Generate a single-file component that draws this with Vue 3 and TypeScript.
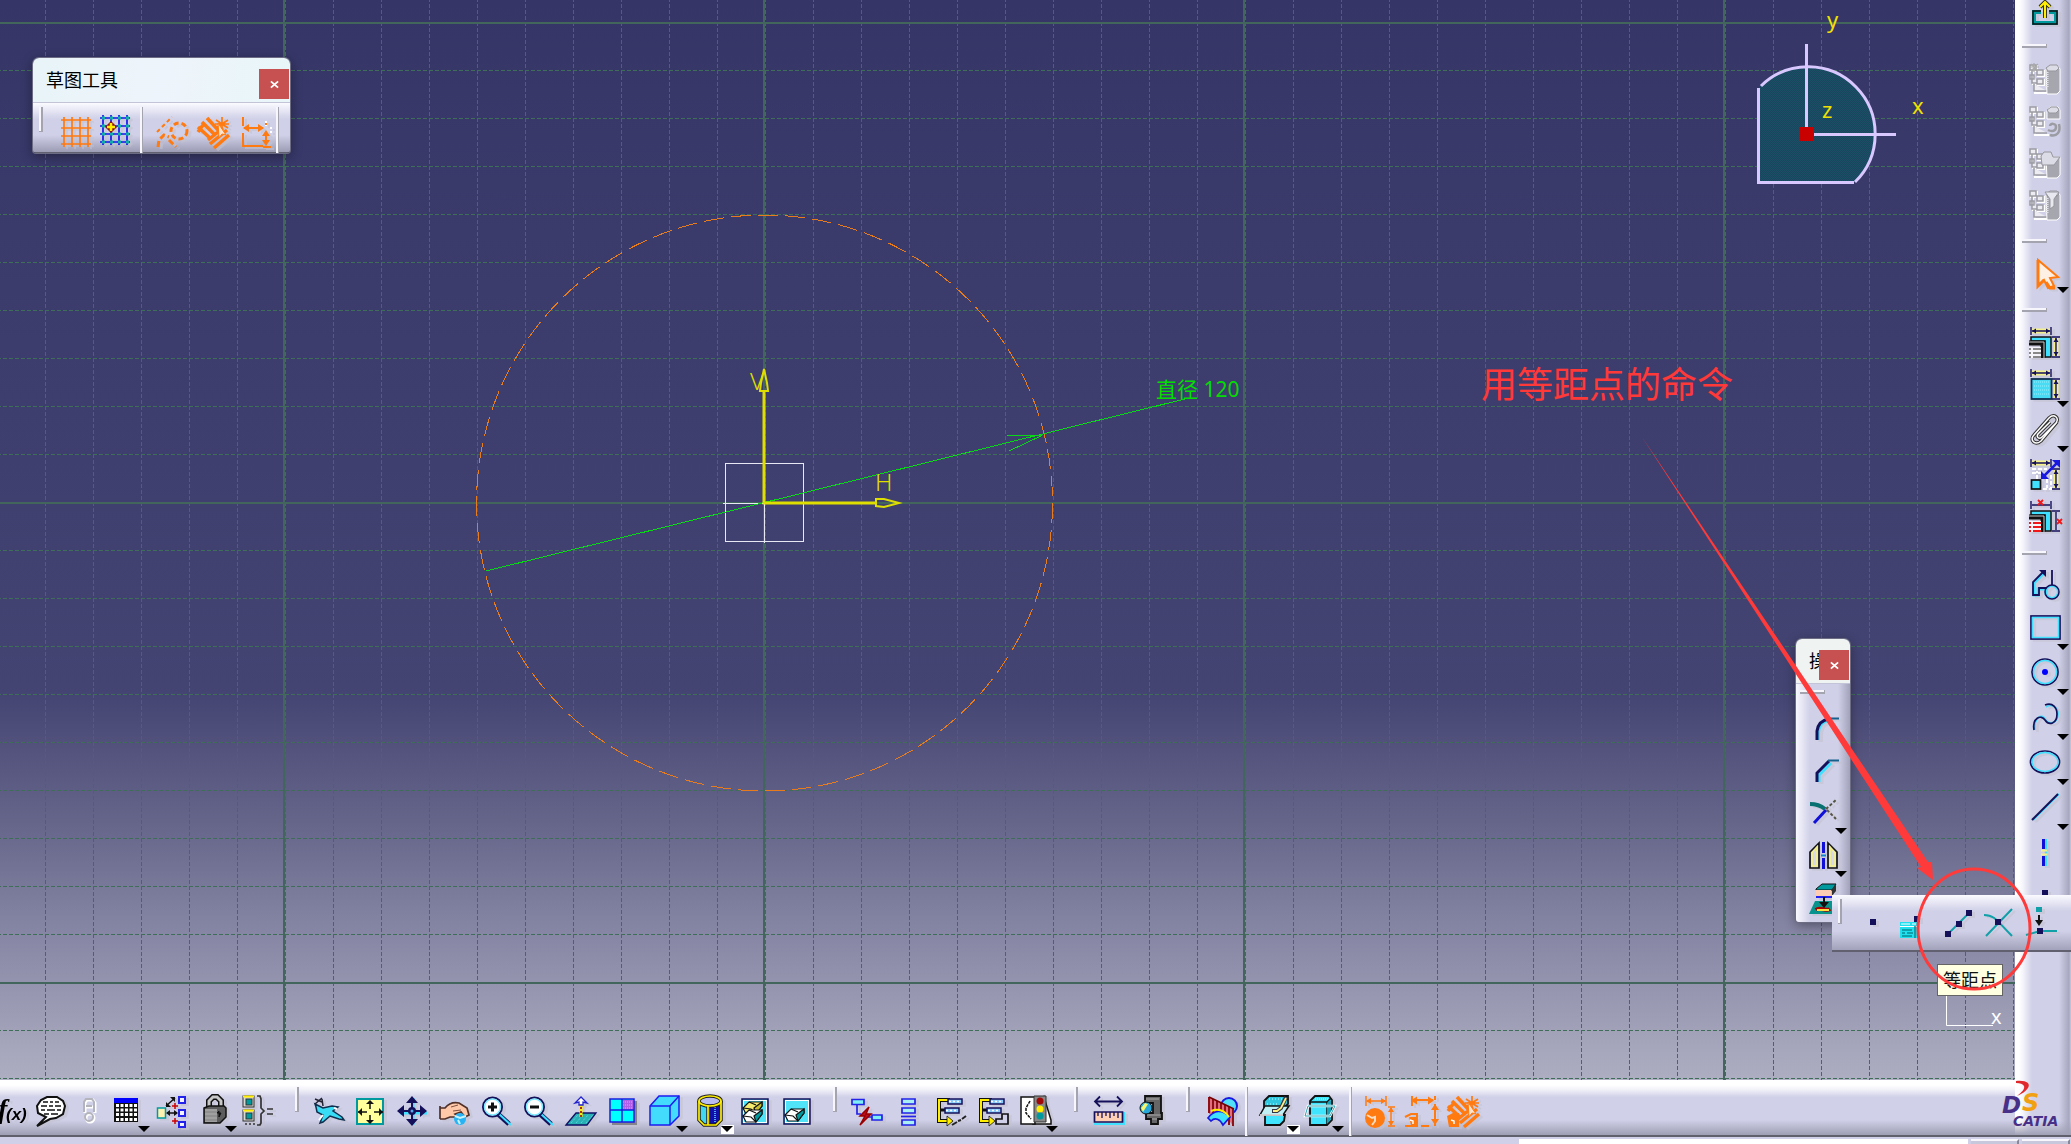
<script setup lang="ts">
interface Tool {
  id: string
  label: string
  art: string
  kind?: 'narrow' | 'disabled'
  menu?: boolean
  lit?: boolean
}

const NAVY = '#14105a'
const CYAN = '#40e0ff'
const TEAL = '#009a9e'
const ORANGE = '#ff7a10'

const yellowDims = `<g stroke="#f4f08c" stroke-width="5" fill="none"><path d="M3 4H21M27 11V29"/></g>
<g stroke="${NAVY}" stroke-width="1.4" fill="none"><path d="M2 0V8M22 0V8M3 4H21M23 10H31M23 30H31M27 11V29"/></g>
<path d="M3 4l4-2.500v5zM21 4l-4-2.500v5zM27 11l-2.500 4h5zM27 29l-2.500-4h5z" fill="${NAVY}"/>`

const panel = (row: string) => `<path d="M0 16H14V31" fill="none" stroke="#111" stroke-width="5"/>
<path d="M0 15H15V31" fill="none" stroke="#ccc" stroke-width="1"/>
<path d="M0 20H12V31H0z" fill="#f4f4fa"/><path d="M0 22H2M4 22H12M0 26H2M4 26H12M0 30H2M4 30H12" stroke="${row}" stroke-width="2"/>`

const tree = (tail: string) => `<path d="M16 5H5V26H14" fill="none" stroke="#111" stroke-width="4"/>
<path d="M6 15H14" stroke="#111" stroke-width="3"/>
<path d="M16 5H5V26H14" fill="none" stroke="#ffee00" stroke-width="2"/>
<path d="M13 21l6 5-6 5z" fill="#ffee00" stroke="#111" stroke-width=".8"/>
<rect x="14" y="4" width="14" height="5" fill="#8cf" stroke="${NAVY}" stroke-width="1.500"/>
<rect x="11" y="13" width="14" height="5" fill="#8cf" stroke="${NAVY}" stroke-width="1.500"/>
<path d="M15 6.500H27M12 15.500H24" stroke="#fff" stroke-width="1.500" stroke-dasharray="2 2"/>${tail}`

const ghost = (extra: string) => `<g transform="translate(0 1)"><g fill="none" stroke="#fff" stroke-width="2" transform="translate(1 1)"><path d="M1 1h6v5H1zM8 6h6v5H8zM8 15h6v5H8zM3 7v12h5M5 20v8h14"/></g>
<g fill="#ececf2" stroke="#9c9ca4" stroke-width="1.500"><path d="M1 1h6v5H1zM3 6v13h5M8 6h6v5H8zM8 15h6v5H8zM1 11h4v4H1zM5 20v7h13"/></g>${extra}</g>`

const block = `<path d="M17 5l4-3h8l2 3v22l-3 3H18z" fill="#a6a6ae" stroke="#fff" stroke-width="1"/><path d="M17 4l4-3h7l2 3-3 3h-8z" fill="#dcdce6" stroke="#96969e" stroke-width="1"/><path d="M18 8v16" stroke="#e2e2ea" stroke-width="3" stroke-dasharray="1 1"/>`

const brush = `<g stroke="${ORANGE}" fill="none" stroke-width="3.500"><path d="M1 11L14 23M5 6L18 19M10 2L22 15M1 16l5-7M13 28L30 14M17 32L32 19M11 24L26 12"/></g>
<g stroke="${ORANGE}" stroke-width="1.700"><path d="M19 4L31 12M25 1v15M19 12L31 4M18 8H32"/></g>
<path d="M21 7l8 12-4-1-3 4z" fill="#ffe4d0" stroke="${ORANGE}"/>`

const magnifier = (sign: string) => `<path d="M18 19L29 29" stroke="${NAVY}" stroke-width="5"/><path d="M19 19L31 30" stroke="${CYAN}" stroke-width="2"/>
<circle cx="12.500" cy="12" r="9.500" fill="#fff" stroke="${NAVY}" stroke-width="2"/><circle cx="12.500" cy="12" r="8" fill="none" stroke="#7ee8ff" stroke-width="1.500"/>
<path d="${sign}" stroke="#111" stroke-width="3"/>`

const eraser = (y: number, top: string, side: string) => `<g stroke="#111" stroke-width="1.200" transform="translate(0 ${y})"><path d="M5 5l6-6h13v4l-6 8H8z" fill="${top}"/><path d="M18 11l6-8v-4l-8 6z" fill="${side}"/><path d="M5 5l8 1 5 5M11 -1l7 3" fill="none"/></g>`

const frame = `<rect x="4" y="4" width="26" height="25" fill="#50e4f8" stroke="${NAVY}" stroke-width="1.500"/><rect x="5.500" y="5.500" width="23" height="22" fill="none" stroke="#fff"/>`

const orangeDims = `<path d="M3 1V11M23 1V11M4 6H22M25 12H32M25 31H32M28 13V30" stroke="${ORANGE}" stroke-width="1.500"/><path d="M3 6l5-3v6zM23 6l-5-3v6zM28 12l-3 5h6zM28 31l-3-5h6z" fill="${ORANGE}"/>`

const bottomGroups: { tail: 'grip' | 'rule' | 'end'; tools: Tool[] }[] = [
  {
    tail: 'grip',
    tools: [
      { id: 'fx', label: '公式', art: `<text x="5" y="23" font-family="Liberation Serif" font-style="italic" font-weight="700" font-size="28">f</text><text x="13" y="25" font-family="Liberation Sans" font-weight="700" font-style="italic" font-size="17">(x)</text>` },
      { id: 'note', label: '注释', art: `<path d="M2 31l9-9-8-4-1-7 4-6 6-3h10l6 4 2 5-2 8-7 4-6 1z" fill="#fff" stroke="#111" stroke-width="2"/><path d="M8 7h5m2 0h3m2 0h4M6 11h6m2 0h4m2 0h6M6 15h4m2 0h8m2 0h4M9 19h5m2 0h7" stroke="#111" stroke-width="1.300"/>` },
      { id: 'check', label: '检查', kind: 'narrow', art: `<g fill="none" stroke="#fff" stroke-width="3"><path d="M12 18V8l2-3h6l2 3v10M12 12h10"/><circle cx="17" cy="23" r="4"/></g><g fill="none" stroke="#b4b4bc" stroke-width="2"><path d="M11 17V7l2-3h6l2 3v10M13 11h6"/><circle cx="16" cy="22" r="4"/></g>` },
      { id: 'table', label: '设计表', menu: true, art: `<rect x="4" y="3" width="24" height="5" fill="#00f"/><rect x="4" y="8" width="24" height="19" fill="#111"/><path d="M6 10.500H27M6 15H27M6 19.500H27M6 24.500H27" stroke="#fff" stroke-width="3" stroke-dasharray="3 1.500"/>` },
      { id: 'law', label: '关联', art: `<rect x="2.500" y="13" width="8" height="10" fill="#fff2b0" stroke="${TEAL}" stroke-width="1.500"/><g fill="#f4f4ff" stroke="#2222e8" stroke-width="2"><path d="M24 2h6v6h-6zM24 15h6v6h-6zM24 27h6v5h-6z"/></g><path d="M12 18H22M11 11L20 3" stroke="#111" stroke-width="1.500"/><path d="M11 18l4-3v6zM23 18l-4-3v6zM20 2v5l-5-5zM11 12V7l5 5z" fill="#111"/><path d="M17 11h6M20 8v6M17 26h6M20 23v6" stroke="#c00" stroke-width="1.500"/>` },
      { id: 'lock', label: '锁定', menu: true, art: `<path d="M12 14V6l4-4h4l4 4v8" fill="none" stroke="#111" stroke-width="6"/><path d="M12 14V6l4-4h4l4 4v8" fill="none" stroke="#c8c8c8" stroke-width="3"/><path d="M7 13l5-2h15l2 2v9l-6 6H7z" fill="#5c5c5c" stroke="#111" stroke-width="1.500"/><path d="M8 14h12v13H8z" fill="#a0a0a0"/><path d="M8 17h12M8 21h12M8 25h12" stroke="#808080"/><path d="M22 22V16l-2 2h4z" fill="#111" stroke="#111"/>` },
      { id: 'equal', label: '等效尺寸', art: `<g stroke="#333" stroke-width="1"><rect x="1" y="1" width="11" height="11" fill="#d8d8d0"/><rect x="1" y="15" width="11" height="11" fill="#d8d8d0"/><rect x="4" y="4" width="6" height="6" fill="${TEAL}"/><rect x="4" y="18" width="6" height="6" fill="${TEAL}"/></g><path d="M1 1.500H12M1 15.500H12" stroke="#ffee00" stroke-width="2"/><path d="M3 29h2m2 0h2m2 0h2M15 1h3l1 3v9l3 3-3 3v9l-1 2h-3M25 14h6M25 19h6" fill="none" stroke="#333" stroke-width="1.700"/>` },
    ],
  },
  {
    tail: 'grip',
    tools: [
      { id: 'fly', label: '飞行模式', art: `<path d="M3 9l8 4 9-2 6 1-5 4 9 6 2 3-5-1-9-3-7 6-3 1 3-8-6-3-1-5z" fill="#38dcf4" stroke="#103050" stroke-width="1.500"/><path d="M3 9L10 3M3 4l7 3M10 4l1 7" stroke="#223" stroke-width="1.500"/><path d="M22 13l3 1M7 25l4-5" stroke="#fff" stroke-width="2"/>` },
      { id: 'fit', label: '全部适应', art: `<rect x="3" y="4" width="26" height="25" fill="#ffff9c" stroke="${TEAL}" stroke-width="2"/><path d="M16 6v8M16 20v8M4 17h9M20 17h9" stroke="#111" stroke-width="1.500"/><path d="M16 5l-4 4h8zM16 29l-4-4h8zM4 17l4-4v8zM29 17l-4-4v8z" fill="#111"/>` },
      { id: 'pan', label: '平移', art: `<path d="M17 3v27M4 18h27" stroke="${CYAN}" stroke-width="3"/><path d="M16 4v24M4 16h24" stroke="${NAVY}" stroke-width="2"/><circle cx="16" cy="16" r="4" fill="${NAVY}"/><circle cx="16" cy="16" r="1.500" fill="#5ae"/><path d="M16 1l-6 7h12zM16 31l-6-7h12zM1 16l7-6v12zM31 16l-7-6v12z" fill="${NAVY}"/>` },
      { id: 'rotate', label: '旋转', art: `<path d="M2 11v13M2 13h5c4-5 9-6 14-5l8 5 2 7-4 2-4-5-6 2 3 3h-8l-5 2H2" fill="#ffc8a8" stroke="#503028" stroke-width="1.700"/><path d="M13 12l7-2M15 16l8-1" stroke="#805040"/><circle cx="22" cy="24" r="6" fill="#28b4f4"/><path d="M17 21l5 2 6-2M20 25l2 4" stroke="#c8f4ff" stroke-width="2" fill="none"/>` },
      { id: 'zoomin', label: '放大', art: magnifier('M8 12h9M12.500 7.500v9') },
      { id: 'zoomout', label: '缩小', art: magnifier('M8 12h9') },
      { id: 'normal', label: '法线视图', art: `<path d="M2 30l10-12h20l-9 12z" fill="#28b0b4" stroke="#116" stroke-width="1.300"/><path d="M7 28l7-8M12 28l7-8M17 28l7-8M22 28l7-8" stroke="#6de" stroke-dasharray="1 1"/><path d="M17 22V6" stroke="#fe0" stroke-width="3"/><path d="M17 22V6" stroke="#a30" stroke-width="2" stroke-dasharray="2 2"/><path d="M17 2l-6 6 4-1v3h4V7l4 1z" fill="#fff" stroke="#22c" stroke-width="1.300"/>` },
      { id: 'views', label: '创建多视图', art: `<path d="M6 6h25v24H6z" fill="#84848c"/><rect x="4" y="4" width="24" height="23" fill="#0ff" stroke="#1c1ce0" stroke-width="1.500"/><path d="M17 5h10v10H17z" fill="#b060e8"/><path d="M17 7h10M17 10h10M17 13h10" stroke="#e8a0f8" stroke-dasharray="1 1"/><path d="M16 4v23M4 15h24" stroke="#1c1ce0" stroke-width="1.500"/>` },
      { id: 'iso', label: '等轴测视图', menu: true, art: `<path d="M2 11L11 1h20v20l-9 9H2z" fill="#44dcfc" stroke="#1c1cf0" stroke-width="1.500"/><path d="M2 11h20v19M22 11l9-10" fill="none" stroke="#1c1cf0" stroke-width="1.500"/>` },
      { id: 'shade', label: '含边线着色', menu: true, lit: true, art: `<path d="M6 6v20l5 4h12l5-4V6z" fill="#40d8f0"/><path d="M17 11h11v15l-4 3h-7z" fill="#1010a8"/><path d="M22 12v16" stroke="#50a8ff" stroke-width="2" stroke-dasharray="1 1"/><ellipse cx="17" cy="6" rx="11" ry="5" fill="#b8bcf0" stroke="#222" stroke-width="3.500"/><path d="M6 6v19l5 5h12l5-5V6M15 11v19" fill="none" stroke="#222" stroke-width="3.500"/><ellipse cx="17" cy="6" rx="11" ry="5" fill="none" stroke="#ffee00" stroke-width="1.700"/><path d="M6 6v19l5 5h12l5-5V6M15 11v19" fill="none" stroke="#ffee00" stroke-width="1.700"/>` },
      { id: 'hide', label: '隐藏/显示', art: frame + eraser(8, '#f4ec70', '#c8bc30') + eraser(16, '#fff', TEAL) },
      { id: 'swap', label: '交换可视空间', art: frame + eraser(15, '#fff', TEAL) },
    ],
  },
  {
    tail: 'grip',
    tools: [
      { id: 'break', label: '断开链接', art: `<path d="M2 4.500h12v5H2zM22 20h10v5H22z" fill="#7cf0f4" stroke="#2222e8" stroke-width="1.700"/><path d="M7 10v9h4M18 22h4" stroke="#2222e8" stroke-width="1.700" fill="none"/><path d="M19 12l-9 9h5l-5 9 11-11h-5z" fill="#b81020" stroke="#900" stroke-width="1.500"/>` },
      { id: 'stack', label: '堆叠', art: `<path d="M10 4h13v5H10zM10 13h13v5H10zM10 25h13v5H10z" fill="#a8f0f4" stroke="#2222e8" stroke-width="1.700"/><path d="M9 21.500h15" stroke="#2222e8" stroke-width="1.700"/>` },
      { id: 'treeline', label: '扫描', art: tree('<path d="M18 30l5-3M24 26l3-1M28 24l4-3" stroke="#222" stroke-width="2"/>') },
      { id: 'treestep', label: '步进', art: tree('<path d="M20 29v-5h6v-5h6v10z" fill="#d0d0e8" stroke="#111" stroke-width="1.700"/>') },
      { id: 'light', label: '求解诊断', menu: true, art: `<path d="M26 2l7 23v4H15z" fill="#fff" stroke="#111" stroke-width="1.500"/><path d="M3 2h14v27H3z" fill="#fff" stroke="#111" stroke-width="1.500"/><path d="M12 6l-4 7v5l5 6" fill="none" stroke="#111" stroke-width="1.500" stroke-dasharray="3 1"/><path d="M16 1h12v26H16z" fill="#888" stroke="#333"/><circle cx="22" cy="6" r="3.500" fill="#a00808"/><circle cx="22" cy="14" r="3.500" fill="#ffee00"/><circle cx="22" cy="21" r="3.500" fill="${TEAL}"/>` },
    ],
  },
  {
    tail: 'grip',
    tools: [
      { id: 'measure', label: '测量间距', art: `<path d="M5 6.500h25M9 1.500l-5 5 5 5M26 1.500l5 5-5 5" fill="none" stroke="${NAVY}" stroke-width="1.800"/><path d="M3 29h30V17" fill="none" stroke="${CYAN}" stroke-width="2"/><path d="M3.500 17h28v10h-28z" fill="#ffd0b4" stroke="${NAVY}" stroke-width="1.700"/><path d="M7 17v4M11 17v6M15 17v4M19 17v6M23 17v4M27 17v6" stroke="${NAVY}" stroke-width="1.300"/>` },
      { id: 'item', label: '测量项', art: `<path d="M12 1h16v17h1v6h-4v5h-7v-5h-5v-6h7V8H12z" fill="#666" stroke="#111" stroke-width="1.800"/><path d="M14 20h13M19 24h5M13 4h13" stroke="#aaa" stroke-width="1"/><circle cx="13" cy="13" r="6" fill="#28a8d8" stroke="#111"/><path d="M8 13l4-5 3 1-5 8z" fill="#f4f870"/>` },
    ],
  },
  {
    tail: 'rule',
    tools: [
      { id: 'curve', label: '曲率分析', art: `<circle cx="26" cy="11" r="8" fill="#50e0f8" stroke="#1818e0" stroke-width="2"/><path d="M6 2l25 12v18l-6-8L6 19z" fill="#e07080"/><path d="M6 2v16M10 4v16M14 6v14M18 8v18M22 10v14M26 12v18M30 13v18" stroke="#901018" stroke-width="2"/><path d="M6 2l25 12" stroke="#700" stroke-width="1.500"/><path d="M5 23c6-8 14-9 22-1l-7 8c-3-6-8-8-12-4z" fill="#40e0ff" stroke="#1818e0" stroke-width="1.700"/><path d="M8 16c8-3 14 0 18 6" fill="none" stroke="#ffee00" stroke-width="2"/>` },
    ],
  },
  {
    tail: 'rule',
    tools: [
      { id: 'cut', label: '按草图平面剪切', menu: true, lit: true, art: `<path d="M5 6l5-5h19v8l-4 4H5z" fill="#30c8e0" stroke="#111" stroke-width="1.800"/><path d="M6 20h20l-1 6-4 4H6z" fill="#40e4fc" stroke="#111" stroke-width="1.800"/><path d="M6 11h24l-6 9H1z" fill="#c0f0f4" stroke="#111" stroke-width="1.500"/><path d="M1 20h23" stroke="#fff" stroke-width="1.500"/><path d="M27 2l-5 11-4 3h-5" fill="none" stroke="#334" stroke-width="4"/><path d="M27 3l-5 10-4 3h-4" fill="none" stroke="#ffef80" stroke-width="1.800"/><path d="M8 9h12M10 4h14" stroke="#c0fcff" stroke-dasharray="1 2"/>` },
      { id: 'box', label: '三维约束', menu: true, art: `<path d="M6 6l5-5h14l3 4v20l-5 5H6z" fill="#40e4fc" stroke="#111" stroke-width="1.800"/><path d="M6 7h17v23M23 7l4-4" stroke="#111" stroke-width="1.500" fill="none"/><path d="M23 8l4-3v19l-4 5z" fill="#18a0b4"/><path d="M4 11h27l-5 10H1z" fill="none" stroke="#fff" stroke-width="2.500"/><path d="M4 11h27l-5 10H1z" fill="none" stroke="#2aa4b4" stroke-width="1"/><path d="M11 4h13" stroke="#c0fcff" stroke-dasharray="1 1"/>` },
    ],
  },
  {
    tail: 'end',
    tools: [
      { id: 'dimcon', label: '尺寸约束', art: `${orangeDims}<circle cx="12" cy="23" r="10" fill="${ORANGE}"/><path d="M4 20l5 3 3-1v4l-3 4" fill="none" stroke="#ffdcc0" stroke-width="2"/>` },
      { id: 'geocon', label: '几何约束', art: `<g stroke="${ORANGE}" fill="none" stroke-width="2"><path d="M8 5H28M7 1v10M30 1v4M30 9v22M16 31h8M0 22l6-3h6v12M0 31h13"/></g><path d="M6 5.500l6-4v8zM29 5.500l-6-4v8zM30 9l-4 6h8zM30 30l-4-6h8zM4 22h8v8H6z" fill="${ORANGE}"/><path d="M5 25l3 1v3" stroke="#fff" stroke-width="1.500" fill="none"/>` },
      { id: 'autocon', label: '自动约束', art: `${brush}<path d="M0 21l6-3h6v14H2z" fill="${ORANGE}"/><path d="M4 25l3 1v3" stroke="#fff" stroke-width="1.500" fill="none"/>` },
    ],
  },
]

const sideGroups: Tool[][] = [
  [{ id: 'exit', label: '退出工作台', art: `<path d="M12 18H5v11h22V18h-7" fill="none" stroke="${TEAL}" stroke-width="4"/><path d="M12 17H4v13h24V17h-8" fill="none" stroke="#111" stroke-width="1.500"/><path d="M16 24V8M11 13l5-5 5 5" fill="none" stroke="#222" stroke-width="4"/><path d="M16 24V8M11 13l5-5 5 5" fill="none" stroke="#ffee00" stroke-width="2.200"/>` }],
  [
    { id: 'g1', label: '重用', kind: 'disabled', art: ghost(block + `<path d="M0 3h10M5 -1v9M2 0l7 7M9 0l-7 7" stroke="#aaa" stroke-width="1.200"/>`) },
    { id: 'g2', label: '更新', kind: 'disabled', art: ghost(`<path d="M18 4l3-3h8l2 3v9H18z" fill="#a6a6ae" stroke="#fff"/><path d="M18 4l4-3h6l2 3-3 3h-7z" fill="#dcdce6" stroke="#96969e"/><path d="M19 24c4 2 8 1 8-3s-6-4-6-1M30 18c2 8-2 13-9 11" fill="none" stroke="#9c9ca4" stroke-width="2.500"/>`) },
    { id: 'g3', label: '打开', kind: 'disabled', art: ghost(`<path d="M17 9h14v18l-3 3H18z" fill="#a6a6ae" stroke="#fff"/><path d="M12 8l3-4h7l2 5h7l-6 8H13z" fill="#dcdce6" stroke="#96969e"/>`) },
    { id: 'g4', label: '筛选', kind: 'disabled', art: ghost(`${block}<path d="M16 2h14l-5 7v7l-4 3V9z" fill="#e8e8f0" stroke="#96969e"/>`) },
  ],
  [{ id: 'select', label: '选择', menu: true, art: `<path d="M9 2v26l6-6 4 8 6-2-4-8 8-1z" fill="#fff0e4" stroke="${ORANGE}" stroke-width="2"/><path d="M9 2v26l6-6M17 24l4 6h5" fill="none" stroke="${ORANGE}" stroke-width="3"/>` }],
  [
    { id: 'conbox', label: '对话框约束', art: `${yellowDims}<path d="M2 10h20v20h-6V14H2z" fill="${CYAN}" stroke="#111" stroke-width="1.500"/>${panel('#888')}` },
    { id: 'con', label: '约束', menu: true, art: `${yellowDims}<rect x="2.500" y="10" width="20" height="20" fill="#48dcf4" stroke="#103050" stroke-width="1.800"/><path d="M5 13h15M5 17h15M5 21h15M5 25h15" stroke="#9cf0f8" stroke-dasharray="1 1"/>` },
    { id: 'fix', label: '固联', menu: true, art: `<path d="M28 8L12 27c-6 5-12-1-7-6L20 4c5-5 11 0 7 5L13 23c-3 3-6 0-4-3L21 8" fill="none" stroke="#333" stroke-width="3.500"/><path d="M28 8L12 27c-6 5-12-1-7-6L20 4c5-5 11 0 7 5L13 23c-3 3-6 0-4-3L21 8" fill="none" stroke="#fff" stroke-width="1.500"/>` },
    { id: 'animate', label: '约束动画', art: `${yellowDims}<path d="M3 10h15M3 14h10M8 20v-8M22 16v14H13M18 20v9" fill="none" stroke="#fff" stroke-width="2" stroke-dasharray="4 2"/><rect x="2.500" y="21" width="9" height="9" fill="${CYAN}" stroke="#111" stroke-width="1.700"/><path d="M14 18L28 4" stroke="#1818e0" stroke-width="2.500"/><path d="M31 1v8l-8-8zM12 20v-8l8 8z" fill="#1818e0"/>` },
    { id: 'edit', label: '编辑多重约束', art: `<g stroke="${NAVY}" stroke-width="1.400" fill="none"><path d="M2 0V8M22 0V8M3 4H21M23 10H31M23 30H31M27 11V29"/></g><path d="M2 10h20v20h-6V14H2z" fill="${CYAN}" stroke="#111" stroke-width="1.500"/>${panel('#f01818')}<path d="M9 -1l5 5M14 -1l-5 5M28 18l5 5M33 18l-5 5" stroke="#f01818" stroke-width="1.800"/>` },
  ],
  [
    { id: 'profile', label: '轮廓', art: `<path d="M15 3L5 13v12h4v-6h8v6" fill="none" stroke="${CYAN}" stroke-width="3"/><path d="M15 1L4 12v13h6v-7h7v5M23 0v16" fill="none" stroke="${NAVY}" stroke-width="1.800"/><circle cx="23" cy="22" r="6" fill="none" stroke="${CYAN}" stroke-width="2"/><circle cx="23" cy="22" r="7" fill="none" stroke="${NAVY}" stroke-width="1.500"/><path d="M10 0h7v7z" fill="${NAVY}"/>` },
    { id: 'rect', label: '矩形', menu: true, art: `<rect x="2" y="4" width="29" height="23" fill="none" stroke="${NAVY}" stroke-width="1.700"/><rect x="3.500" y="5.500" width="26" height="20" fill="none" stroke="${CYAN}" stroke-width="1.500"/>` },
    { id: 'circle', label: '圆', menu: true, art: `<circle cx="16" cy="15" r="13" fill="none" stroke="${NAVY}" stroke-width="1.700"/><circle cx="16" cy="15" r="11.500" fill="none" stroke="${CYAN}" stroke-width="1.500"/><circle cx="16" cy="15" r="3" fill="#00f"/>` },
    { id: 'spline', label: '样条线', menu: true, art: `<path d="M17 5c6-4 12 1 12 7 0 10-10 11-13 5s-11-2-10 11" fill="none" stroke="${CYAN}" stroke-width="1.700"/><path d="M16 3c8-3 12 3 12 9 0 10-8 12-12 6s-13-2-11 10" fill="none" stroke="${NAVY}" stroke-width="1.700"/>` },
    { id: 'ellipse', label: '椭圆', menu: true, art: `<ellipse cx="16" cy="15" rx="14.500" ry="11" fill="none" stroke="${NAVY}" stroke-width="1.700"/><ellipse cx="16" cy="15" rx="13" ry="9.500" fill="none" stroke="${CYAN}" stroke-width="1.500"/>` },
    { id: 'line', label: '直线', menu: true, art: `<path d="M4 28L30 2" stroke="${CYAN}" stroke-width="2"/><path d="M3 28L29 2" stroke="${NAVY}" stroke-width="2"/>` },
    { id: 'axis', label: '轴', art: `<path d="M17 2v27" stroke="${CYAN}" stroke-width="2"/><path d="M14.500 2v10M14.500 19v10" stroke="#1010d8" stroke-width="3"/><path d="M12 13.500h6M12 17.500h6" stroke="#f4f08c" stroke-width="2"/>` },
    { id: 'point', label: '点', art: `<rect x="13" y="11" width="6" height="6" fill="${NAVY}"/>` },
  ],
]

const opsTools: Tool[] = [
  { id: 'corner', label: '圆角', art: `<path d="M12 27v-6c0-8 4-13 12-13" fill="none" stroke="${CYAN}" stroke-width="2"/><path d="M10 27v-9c1-7 5-11 12-12" fill="none" stroke="${NAVY}" stroke-width="3"/><path d="M20 5.500h12" stroke="#18608c" stroke-width="2"/>` },
  { id: 'chamfer', label: '倒角', art: `<path d="M12 27v-7L24 8" fill="none" stroke="${CYAN}" stroke-width="3"/><path d="M10 27v-9L22 6" fill="none" stroke="${NAVY}" stroke-width="3"/><path d="M21 5.500h11" stroke="#18608c" stroke-width="2"/>` },
  { id: 'trim', label: '修剪', menu: true, art: `<path d="M3 7c6 0 10 1 15 5" fill="none" stroke="#087070" stroke-width="4"/><path d="M7 26L19 13" stroke="#1010d8" stroke-width="3"/><path d="M19 12L30 2M20 13l9 9" stroke="#554" stroke-width="2" stroke-dasharray="3 2"/>` },
  { id: 'mirror', label: '镜像', menu: true, art: `<path d="M3 28V12l9-9v25zM30 28V12l-9-9v25z" fill="#d8d8e8" stroke="#111" stroke-width="1.700"/><path d="M5 26V13l5-6v19zM28 26V13l-5-6v19z" fill="none" stroke="#f4f08c" stroke-width="1.700"/><path d="M16.500 2v11M16.500 18v11" stroke="#1010d8" stroke-width="3"/><path d="M14 15.500h5" stroke="#18c" stroke-width="2"/>` },
  { id: 'project', label: '投影三维元素', art: `<path d="M9 6l6-5h14l-4 6H9z" fill="${TEAL}" stroke="#111"/><path d="M9 7h15v6H9z" fill="#ffcdb4"/><path d="M25 7l4-6v7l-4 5z" fill="#333"/><path d="M9 14h16" stroke="#2222f0" stroke-width="2"/><path d="M2 31l6-13h24v13z" fill="#08948c"/><path d="M9 27c4-4 10 2 14-1" stroke="#a00" stroke-width="4" fill="none"/><path d="M10 27h12" stroke="#ffe040" stroke-width="2"/><path d="M17 14v7" stroke="#111" stroke-width="2"/><path d="M12 19h10l-5 6z" fill="#111"/>` },
]

const sq = (x: number, y: number) => `<rect x="${x - 3}" y="${y - 3}" width="6" height="6" fill="${NAVY}"/>`
const pointTools: Tool[] = [
  { id: 'p1', label: '通过单击创建点', art: sq(18, 15) },
  { id: 'p2', label: '使用坐标创建点', art: `${sq(20, 12)}<path d="M3 15h17v16H3z" fill="#20e0f0"/><path d="M4 17h9m2 0h4M3 19.500h17" stroke="#fff" stroke-width="1"/><path d="M5 23h10M5 26h3m2 0h6M5 29h10M18 19v12" stroke="#0a8c94" stroke-width="1.500"/>` },
  { id: 'p3', label: '等距点', art: `<path d="M9 27L30 6" stroke="#10a0a8" stroke-width="2"/>${sq(9, 27)}${sq(20, 17)}${sq(30, 6)}` },
  { id: 'p4', label: '相交点', art: `<path d="M3 8c11 0 13 6 28 21M31 2L5 29" fill="none" stroke="#10a0a8" stroke-width="2"/>${sq(17, 15)}` },
  { id: 'p5', label: '投影点', art: `<path d="M3 28l14-4h17" fill="none" stroke="#10a0a8" stroke-width="2"/><rect x="13" y="0" width="6" height="5" fill="#10a0a8"/><path d="M16 8v6" stroke="#111" stroke-width="2"/><path d="M12 13h8l-4 6z" fill="#111"/>${sq(17, 24)}` },
]

const sketchLeft: Tool[] = [
  { id: 'grid', label: '网格', art: `<path d="M4 1v30M12 1v30M20 1v30M28 1v30M1 4h30M1 12h30M1 20h30M1 28h30" stroke="${ORANGE}" stroke-width="1.700"/>` },
  { id: 'snap', label: '点对齐', art: `<path d="M4 -1v30M12 -1v30M20 -1v30M28 -1v30M1 2h30M1 10h30M1 18h30M1 26h30" stroke="#1414f0" stroke-width="1.700"/><path d="M3 2h3M11 2h3M19 2h3M27 2h3M3 10h3M19 10h3M27 10h3M3 18h3M11 18h3M19 18h3M27 18h3M3 26h3M11 26h3M19 26h3M27 26h3" stroke="#10b0a8" stroke-width="3"/><path d="M12 5l6 6-6 6-6-6z" fill="#901010"/><path d="M12 7v8M8 11h8" stroke="#ffee00" stroke-width="2.500"/>` },
]
const sketchRight: Tool[] = [
  { id: 'construct', label: '构造元素', art: `<path d="M2 16L17 1" stroke="${ORANGE}" stroke-width="2" stroke-dasharray="4 3"/><circle cx="24" cy="15" r="8" fill="none" stroke="${ORANGE}" stroke-width="3" stroke-dasharray="5 3"/><path d="M3 31l1-7 5-5 5 2M14 24l7 7" fill="none" stroke="${ORANGE}" stroke-width="3" stroke-dasharray="6 3"/>` },
  { id: 'geo', label: '几何约束', art: brush },
  { id: 'dims', label: '尺寸约束', art: `<path d="M4 1v9M5 12h19M4 17v13h20M27 6v4M24 31h8M27 17v10" fill="none" stroke="${ORANGE}" stroke-width="2"/><path d="M4 12l6-4v8zM25 12l-6-4v8zM27 14l-4 6h8zM27 30l-4-6h8z" fill="${ORANGE}"/><path d="M27 5v5M32 11v6" stroke="#fff" stroke-width="2" stroke-dasharray="2 2"/>` },
]
</script>

<template>
  <main class="app">
    <section class="canvas">
      <svg class="drawing" aria-label="草图">
        <defs>
          <pattern id="minor" width="48" height="48" x="45" y="22" patternUnits="userSpaceOnUse">
            <path d="M.5 0V48M0 .5H48" stroke="#3f6e58" stroke-width="1" stroke-dasharray="4 2" fill="none" />
          </pattern>
          <pattern id="major" width="480" height="480" x="283" y="22" patternUnits="userSpaceOnUse">
            <path d="M1 0V480M0 1H480" stroke="#42655c" stroke-width="2" fill="none" />
          </pattern>
          <pattern id="hatch" width="2" height="2" patternUnits="userSpaceOnUse">
            <path d="M0 0h1v1H0zM1 1h1v1H1z" fill="#1a5064" />
          </pattern>
        </defs>
        <rect width="100%" height="100%" fill="url(#minor)" />
        <rect width="100%" height="100%" fill="url(#major)" />

        <g class="compass">
          <path d="M1758 88L1761 86A66 66 0 0 1 1855 182H1758z" fill="#1b4460" />
          <path d="M1758 88L1761 86A66 66 0 1 1 1855 182H1758z" fill="url(#hatch)" />
          <path d="M1761 86A66 66 0 1 1 1855 182M1854 182.500H1758.500V88M1806.500 44V128M1813 134.500H1896" />
          <rect x="1800" y="127" width="14" height="14" fill="#c80000" />
          <text x="1827" y="28">y</text>
          <text x="1912" y="114">x</text>
          <text x="1822" y="118">z</text>
        </g>

        <circle cx="764.500" cy="503" r="288" class="dashed" />

        <g class="origin">
          <path d="M725 463.500H803V541.500H725zM723 503H764M764.500 503V543" />
        </g>

        <g class="dimension">
          <path d="M486 571L1189 398M1007 435.500H1042L1009 451" />
          <text x="1156" y="397">直径 120</text>
        </g>

        <g class="axes">
          <path d="M764 392V503H875" />
          <path class="thin" d="M764 369l-3 14-1 8h8l-1-8zM876 499v7l8 1 15-4-15-4z" />
          <text x="750" y="390">V</text>
          <text x="875" y="491">H</text>
        </g>

        <path d="M1946.500 990V1025.500H1993" class="corner" />
        <text x="1991" y="1024" class="corner-label">x</text>
      </svg>

      <section class="window sketch" aria-label="草图工具">
        <header>
          <h2>草图工具</h2>
          <button class="close" aria-label="关闭"><svg viewBox="0 0 10 10"><path d="M1 1.500l8 7M9 1.500l-8 7" /></svg></button>
        </header>
        <div class="row">
          <span class="grip"></span>
          <div class="pair">
            <button v-for="t in sketchLeft" :key="t.id" class="tool flat" :aria-label="t.label"><svg class="icon" viewBox="0 0 32 32" v-html="t.art"></svg></button>
          </div>
          <span class="rule"></span>
          <div class="trio">
            <button v-for="t in sketchRight" :key="t.id" class="tool flat" :aria-label="t.label"><svg class="icon" viewBox="0 0 32 32" v-html="t.art"></svg></button>
          </div>
          <span class="rule"></span>
        </div>
      </section>

      <section class="window ops" aria-label="操作">
        <header>
          <h2>操作</h2>
          <button class="close" aria-label="关闭"><svg viewBox="0 0 10 10"><path d="M1 1.500l8 7M9 1.500l-8 7" /></svg></button>
        </header>
        <div class="column">
          <span class="bar-grip"></span>
          <button v-for="t in opsTools" :key="t.id" class="tool tall" :class="{ menu: t.menu }" :aria-label="t.label"><svg class="icon" viewBox="0 0 32 32" v-html="t.art"></svg></button>
        </div>
      </section>
    </section>

    <nav class="side">
      <template v-for="(group, i) in sideGroups" :key="i">
        <span v-if="i" class="bar-grip"></span>
        <div class="stack" :class="{ single: group.length === 1 }">
          <button v-for="t in group" :key="t.id" class="tool tall" :class="[t.kind, { menu: t.menu }]" :disabled="t.kind === 'disabled'" :aria-label="t.label"><svg class="icon" viewBox="0 0 32 32" v-html="t.art"></svg></button>
        </div>
      </template>
    </nav>

    <nav class="bottom">
      <template v-for="(group, i) in bottomGroups" :key="i">
        <button v-for="t in group.tools" :key="t.id" class="tool wide" :class="[t.kind, { menu: t.menu, lit: t.lit }]" :aria-label="t.label"><svg class="icon" viewBox="0 0 32 32" v-html="t.art"></svg></button>
        <span v-if="group.tail === 'grip'" class="grip"></span>
        <span v-else-if="group.tail === 'rule'" class="rule"></span>
      </template>
    </nav>

    <svg class="logo" viewBox="0 0 64 48" aria-label="CATIA">
      <path d="M15 1c10-1 15 2 12 7-2 3-6 6-11 8 5-4 8-7 7-10-1-2-4-3-8-3z" fill="#e0282c" />
      <text x="1" y="33" class="d">D</text>
      <text x="21" y="31" class="s">S</text>
      <text x="12" y="46" class="name">CATIA</text>
    </svg>

    <footer class="status">
      <input class="command" type="text" aria-label="命令" />
      <button class="slot" aria-label="历史"></button>
      <button class="slot" aria-label="帮助"></button>
    </footer>

    <section class="flyout" aria-label="点">
      <span class="grip"></span>
      <button v-for="t in pointTools" :key="t.id" class="tool wide" :aria-label="t.label"><svg class="icon" viewBox="0 0 32 32" v-html="t.art"></svg></button>
    </section>
    <div class="tip" role="tooltip">等距点</div>

    <svg class="markup" aria-label="标注">
      <text x="1481" y="398">用等距点的命令</text>
      <path d="M1642 437L1928 862L1932 862L1933 880L1917 868L1921 867z" />
      <ellipse cx="1974" cy="929" rx="56" ry="60" />
    </svg>
  </main>
</template>

<style>
body {
  margin: 0;
  overflow: hidden;
  background: #d0d0e8;
}
</style>

<style scoped>
.app {
  position: relative;
  display: grid;
  grid-template-columns: 1fr 56px;
  grid-template-rows: 1fr 57px 7px;
  height: 100vh;
  overflow: hidden;
  font-family: "Noto Sans CJK SC", "Noto Sans", sans-serif;
}

.canvas {
  position: relative;
  overflow: hidden;
  background: linear-gradient(#353567 0%, #444473 64%, #65658a 76%, #8888a6 87%, #aeaec2 100%);
}

.drawing {
  position: absolute;
  width: 100%;
  height: 100%;
}

.compass path:nth-of-type(3) { fill: none; stroke: #d8c8ff; stroke-width: 3; }
.compass text { fill: #f0e000; font: 22px "Noto Sans", sans-serif; }
.dashed { fill: none; stroke: #e87c1c; stroke-width: 2; stroke-dasharray: 20 7; shape-rendering: crispEdges; stroke-width: 1; }
.origin path { fill: none; stroke: #e8e8f4; stroke-width: 1; shape-rendering: crispEdges; }
.dimension path { fill: none; stroke: #08d818; stroke-width: 1; shape-rendering: crispEdges; }
.dimension text { fill: #04dc04; font-family: "Noto Sans", "Noto Sans CJK SC", sans-serif; font-size: 21px; font-weight: 400; }
.axes path { fill: none; stroke: #dede00; stroke-width: 3; }
.axes .thin { stroke-width: 2; }
.axes text { fill: #dede00; font: 300 24px "Noto Sans", sans-serif; }
.corner { fill: none; stroke: #fff; stroke-width: 1; }
.corner-label { fill: #fff; font: 20px "Noto Sans", sans-serif; }

.tool {
  position: relative;
  display: flex;
  flex: none;
  align-items: center;
  justify-content: center;
  padding: 0;
  border: 0;
  background: none;
}
.icon {
  flex: none;
  width: 32px;
  height: 32px;
  overflow: visible;
  filter: drop-shadow(3px 2px 0 #c3c3d199);
}
.disabled .icon, .narrow .icon { filter: none; }

.wide { width: 42px; height: 32px; }
.wide.menu { width: 45px; padding-right: 3px; }
.wide.narrow { width: 33px; }
.tall { width: 32px; height: 42px; }
.tall.menu { height: 45px; padding-bottom: 3px; }
.single .tall.menu { height: 42px; padding-bottom: 0; }
.flat { width: 32px; height: 32px; }

.menu::after {
  content: "";
  position: absolute;
  right: 0;
  bottom: -6px;
  border: 6px solid transparent;
  border-top-color: #000;
  border-bottom: 0;
}
.wide.menu::after { bottom: -5px; }
.tall.menu::after { right: -8px; bottom: 2px; }
.lit::before {
  content: "";
  position: absolute;
  right: -1px;
  bottom: -7px;
  width: 13px;
  height: 9px;
  background: #fff;
}

.grip {
  flex: none;
  width: 2px;
  height: 24px;
  background: #f6f6fc;
  border-right: 2px solid #a4a4b0;
  border-bottom: 1px solid #a4a4b0;
}
.bar-grip {
  flex: none;
  width: 24px;
  height: 2px;
  background: #f6f6fc;
  border-right: 1px solid #a4a4b0;
  border-bottom: 2px solid #a4a4b0;
}
.rule {
  flex: none;
  width: 2px;
  background: #f6f6fc;
  border-right: 1px solid #a4a4b0;
}

.side {
  display: flex;
  grid-row: 1 / 3;
  grid-column: 2;
  flex-direction: column;
  min-height: 0;
  overflow: hidden;
  background:
    linear-gradient(#d0d0e800 calc(100% - 16px), #a0a0b6 calc(100% - 2px), #60606c calc(100% - 2px)),
    linear-gradient(90deg, #fff 4px, #f4f4fb 8px, #d0d0e8 17px, #d0d0e8 44px, #a6a6be 54px, #cacadc 56px);
}
.stack { display: flex; flex: none; flex-direction: column; padding-left: 14px; }
.stack:first-child { margin-top: -11px; }
.side .bar-grip { margin: 13px 0 10px 7px; }

.bottom {
  display: flex;
  grid-row: 2;
  grid-column: 1;
  align-items: flex-start;
  min-width: 0;
  padding: 15px 0 0;
  overflow: hidden;
  background: linear-gradient(#fff 5px, #f0f0f8 10px, #d0d0e8 17px, #d0d0e8 40px, #9e9eb4 55px, #60606c 55px);
}
.bottom .tool:first-child { margin-left: -12px; }
.bottom .grip { margin: -8px 8px 0 16px; }
.bottom .rule { height: 49px; margin: -8px 6px 0 5px; }

.logo {
  position: absolute;
  right: 6px;
  bottom: 16px;
  width: 64px;
  height: 48px;
}
.logo text { font-family: "DejaVu Sans", sans-serif; font-style: italic; fill: #483088; }
.logo .d { font-size: 23px; font-weight: 700; }
.logo .s { font-size: 24px; font-weight: 700; fill: #f0a010; }
.logo .name { font-size: 14px; font-weight: 700; }

.status {
  display: flex;
  grid-row: 3;
  grid-column: 1 / 3;
  justify-content: flex-end;
  gap: 3px;
  padding: 2px 1px 0 0;
  background: #d0d0e8;
}
.command { width: 449px; height: 5px; padding: 0; border: 0; background: #fff; }
.slot { width: 48px; height: 5px; padding: 0; border: 0; border-top: 2px solid #f6f6fc; border-right: 2px solid #888898; background: #c8c8dc; }

.window {
  position: absolute;
  border-radius: 6px 6px 3px 3px;
  overflow: hidden;
  box-shadow: 0 0 0 1px #6c6c84, 0 3px 12px #0006;
}
.window header {
  position: relative;
  display: flex;
  align-items: center;
  height: 45px;
  padding-bottom: 3px;
  background: linear-gradient(100deg, #e8f4f8, #eef4fb 50%, #e8f6f8);
  border-bottom: 1px solid #c4c4d8;
  box-sizing: border-box;
}
.window h2 { margin: 0 0 0 13px; font-size: 18px; font-weight: 400; line-height: 24px; white-space: nowrap; color: #000; }
.close {
  position: absolute;
  top: 11px;
  right: 1px;
  display: flex;
  align-items: center;
  justify-content: center;
  width: 30px;
  height: 30px;
  padding: 0;
  border: 0;
  background: #c75050;
}
.close svg { width: 9px; height: 9px; }
.close path { fill: none; stroke: #fff; stroke-width: 2; }

.sketch { left: 33px; top: 58px; width: 257px; }
.row {
  display: flex;
  height: 50px;
  background: linear-gradient(#fafaff, #d0d0e8 16px, #d0d0e8 32px, #9c9cb4 49px, #606070 49px);
}
.row .grip { margin: 4px 0 0 6px; }
.row .rule { height: 46px; margin-top: 4px; }
.pair { display: flex; gap: 7px; margin: 13px 9px 0 17px; }
.trio { display: flex; gap: 10px; margin: 13px 5px 0 12px; }

.ops { left: 1796px; top: 639px; width: 54px; }
.ops header { background: #eff4f3; }
.column {
  display: flex;
  flex-direction: column;
  height: 238px;
  background: linear-gradient(90deg, #f8f8ff, #d0d0e8 14px, #d0d0e8 42px, #a2a2ba);
}
.column .bar-grip { margin: 6px 0 14px 4px; }
.column .tool { margin-left: 11px; }
.column .tall.menu { height: 43px; padding-bottom: 1px; }
.column .tall.menu::after { right: -8px; bottom: 1px; }

.flyout {
  position: absolute;
  top: 895px;
  right: 0;
  display: flex;
  width: 239px;
  height: 57px;
  background: linear-gradient(#fafaff, #d0d0e8 16px, #d0d0e8 36px, #a2a2ba 55px, #606070 55px);
}
.flyout .grip { margin: 4px 8px 0 6px; }
.flyout .tool { margin-top: 12px; }

.tip {
  position: absolute;
  top: 964px;
  left: 1937px;
  padding: 1px 5px 3px;
  border: 1px solid #646464;
  background: #ffffe1;
  font-size: 18px;
  line-height: 26px;
  color: #111;
}

.markup {
  position: absolute;
  inset: 0;
  width: 100%;
  height: 100%;
  pointer-events: none;
}
.markup text { fill: #ff3838; font-size: 36px; font-weight: 400; }
.markup path { fill: #ff3a3a; }
.markup ellipse { fill: none; stroke: #ff3a3a; stroke-width: 3; }
</style>
